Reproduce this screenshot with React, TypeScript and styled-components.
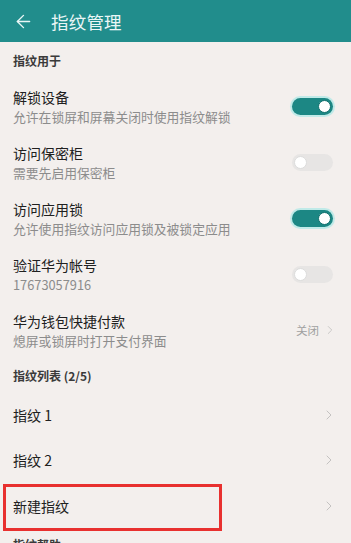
import React from 'react'
import styled, { createGlobalStyle } from 'styled-components'
import { ArrowLeft, ChevronRight } from 'lucide-react'

const GlobalStyle = createGlobalStyle`
  html, body {
    margin: 0;
    padding: 0;
    background: #f3efed;
    font-family: "Noto Sans CJK SC", "Noto Sans", Roboto, sans-serif;
    overflow: hidden;
  }
`

const Page = styled.div`
  width: 351px;
  height: 543px;
  overflow: hidden;
  background: #f3efed;
`

const Header = styled.div`
  height: 42px;
  background: #218d8c;
  display: flex;
  align-items: center;
  padding-left: 13px;
  gap: 17px;
  color: #eaf6f6;
`

const HeaderTitle = styled.div`
  font-size: 17.5px;
  letter-spacing: 0.2px;
`

const SectionTitle = styled.div<{ $h: number }>`
  height: ${p => p.$h}px;
  display: flex;
  align-items: center;
  padding-left: 13px;
  font-size: 12px;
  font-weight: 700;
  color: #3a3a3a;
`

const Row = styled.div<{ $h: number }>`
  position: relative;
  height: ${p => p.$h}px;
  display: flex;
  align-items: center;
  justify-content: space-between;
  padding: 0 18px 0 13px;
`

const TextBlock = styled.div`
  display: flex;
  flex-direction: column;
  gap: 3px;
`

const Title = styled.div`
  font-size: 14px;
  color: #202020;
  line-height: 18px;
`

const Sub = styled.div`
  font-size: 12.8px;
  color: #8c8c8c;
  line-height: 16px;
`

const Track = styled.div<{ $on: boolean }>`
  width: 41px;
  height: 17px;
  border-radius: 9px;
  box-sizing: border-box;
  display: flex;
  align-items: center;
  justify-content: ${p => (p.$on ? 'flex-end' : 'flex-start')};
  padding: 0 2px;
  background: ${p => (p.$on ? '#1c8784' : '#e7e5e4')};
  box-shadow: ${p => (p.$on ? '0 0 0 2px rgba(150, 230, 228, 0.55)' : 'none')};
`

const Knob = styled.div<{ $on: boolean }>`
  width: 13px;
  height: 13px;
  border-radius: 50%;
  background: #ffffff;
  box-sizing: border-box;
  border: 1px solid ${p => (p.$on ? '#0f6f6c' : '#dcdcdc')};
`

const Trail = styled.div`
  display: flex;
  align-items: center;
  gap: 4px;
  font-size: 11.5px;
  color: #a0a0a0;
`

const Chevron = styled(ChevronRight)`
  color: #c4c2c1;
  margin-right: -4px;
`

const Highlight = styled.div`
  position: absolute;
  left: 3px;
  top: 1px;
  width: 219px;
  height: 47px;
  box-sizing: border-box;
  border: 3px solid #e8302f;
  pointer-events: none;
`

const Toggle = ({ on }: { on: boolean }) => (
  <Track $on={on}>
    <Knob $on={on} />
  </Track>
)

const settings = [
  { title: '解锁设备', sub: '允许在锁屏和屏幕关闭时使用指纹解锁', on: true },
  { title: '访问保密柜', sub: '需要先启用保密柜', on: false },
  { title: '访问应用锁', sub: '允许使用指纹访问应用锁及被锁定应用', on: true },
  { title: '验证华为帐号', sub: '17673057916', on: false },
]

export default function App() {
  return (
    <Page>
      <GlobalStyle />
      <Header>
        <ArrowLeft size={21} strokeWidth={1.6} />
        <HeaderTitle>指纹管理</HeaderTitle>
      </Header>
      <SectionTitle $h={36}>指纹用于</SectionTitle>
      {settings.map(s => (
        <Row $h={56} key={s.title}>
          <TextBlock>
            <Title>{s.title}</Title>
            <Sub>{s.sub}</Sub>
          </TextBlock>
          <Toggle on={s.on} />
        </Row>
      ))}
      <Row $h={56}>
        <TextBlock>
          <Title>华为钱包快捷付款</Title>
          <Sub>熄屏或锁屏时打开支付界面</Sub>
        </TextBlock>
        <Trail>
          关闭
          <Chevron size={14} strokeWidth={1.5} />
        </Trail>
      </Row>
      <SectionTitle $h={34}>指纹列表 (2/5)</SectionTitle>
      <Row $h={45}>
        <Title>指纹 1</Title>
        <Chevron size={16} strokeWidth={1.5} />
      </Row>
      <Row $h={46}>
        <Title>指纹 2</Title>
        <Chevron size={16} strokeWidth={1.5} />
      </Row>
      <Row $h={46}>
        <Title>新建指纹</Title>
        <Chevron size={16} strokeWidth={1.5} />
        <Highlight />
      </Row>
      <SectionTitle $h={30}>指纹帮助</SectionTitle>
    </Page>
  )
}
